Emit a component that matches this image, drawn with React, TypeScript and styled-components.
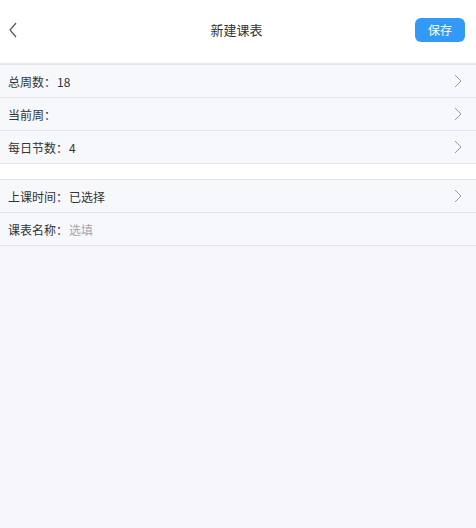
import React from "react";
import styled, { createGlobalStyle } from "styled-components";

const GlobalStyle = createGlobalStyle`
  html, body {
    margin: 0;
    padding: 0;
    background-color: #f6f6fb;
    font-family: "Noto Sans CJK SC", "Noto Sans", sans-serif;
  }
`;

const Page = styled.div`
  display: flex;
  flex-direction: column;
  width: 100%;
  min-height: 528px;
  background-color: #f6f6fb;
`;

const Header = styled.div`
  display: flex;
  align-items: center;
  justify-content: space-between;
  height: 64px;
  padding: 0 11px 0 8px;
  background-color: white;
  border-bottom: 1px solid #e8e8ec;
  box-sizing: border-box;
`;

const BackButton = styled.div`
  display: flex;
  align-items: center;
  width: 50px;
  height: 24px;
  margin-top: -4px;
`;

const Title = styled.div`
  font-size: 13px;
  color: #333;
  margin-top: -4px;
`;

const SaveButton = styled.div`
  display: flex;
  align-items: center;
  justify-content: center;
  width: 50px;
  height: 24px;
  margin-top: -4px;
  border-radius: 6px;
  background-color: #3399f7;
  color: white;
  font-size: 12px;
`;

const Group = styled.div`
  display: flex;
  flex-direction: column;
  border-top: 1px solid #e6e6ea;
`;

const Gap = styled.div`
  height: 15px;
  background-color: white;
`;

const Row = styled.div`
  display: flex;
  align-items: center;
  height: 33px;
  padding: 0 14px 0 8px;
  background-color: #f7f8fc;
  border-bottom: 1px solid #e3e3e8;
  box-sizing: border-box;
  font-size: 12px;
`;

const Label = styled.span`
  color: #333;
`;

const Value = styled.span<{ $placeholder?: boolean }>`
  flex: 1;
  margin-left: 1px;
  color: ${(p) => (p.$placeholder ? "#a6a6a6" : "#333")};
`;

const Chevron = () => (
  <svg width="8" height="14" viewBox="0 0 8 14">
    <path d="M1 1 L7 7 L1 13" fill="none" stroke="#9a9a9a" strokeWidth="1" />
  </svg>
);

interface Item {
  label: string;
  value?: string;
  placeholder?: boolean;
  arrow?: boolean;
}

const first: Item[] = [
  { label: "总周数：", value: "18", arrow: true },
  { label: "当前周：", arrow: true },
  { label: "每日节数：", value: "4", arrow: true },
];

const second: Item[] = [
  { label: "上课时间：", value: "已选择", arrow: true },
  { label: "课表名称：", value: "选填", placeholder: true },
];

const renderRow = (item: Item) => (
  <Row key={item.label}>
    <Label>{item.label}</Label>
    <Value $placeholder={item.placeholder}>{item.value}</Value>
    {item.arrow && <Chevron />}
  </Row>
);

const App = () => {
  return (
    <Page>
      <GlobalStyle />
      <Header>
        <BackButton>
          <svg width="10" height="16" viewBox="0 0 10 16">
            <path d="M8 1 L2 8 L8 15" fill="none" stroke="#555" strokeWidth="1.2" />
          </svg>
        </BackButton>
        <Title>新建课表</Title>
        <SaveButton>保存</SaveButton>
      </Header>
      <Group>{first.map(renderRow)}</Group>
      <Gap />
      <Group>{second.map(renderRow)}</Group>
    </Page>
  );
};

export default App;
